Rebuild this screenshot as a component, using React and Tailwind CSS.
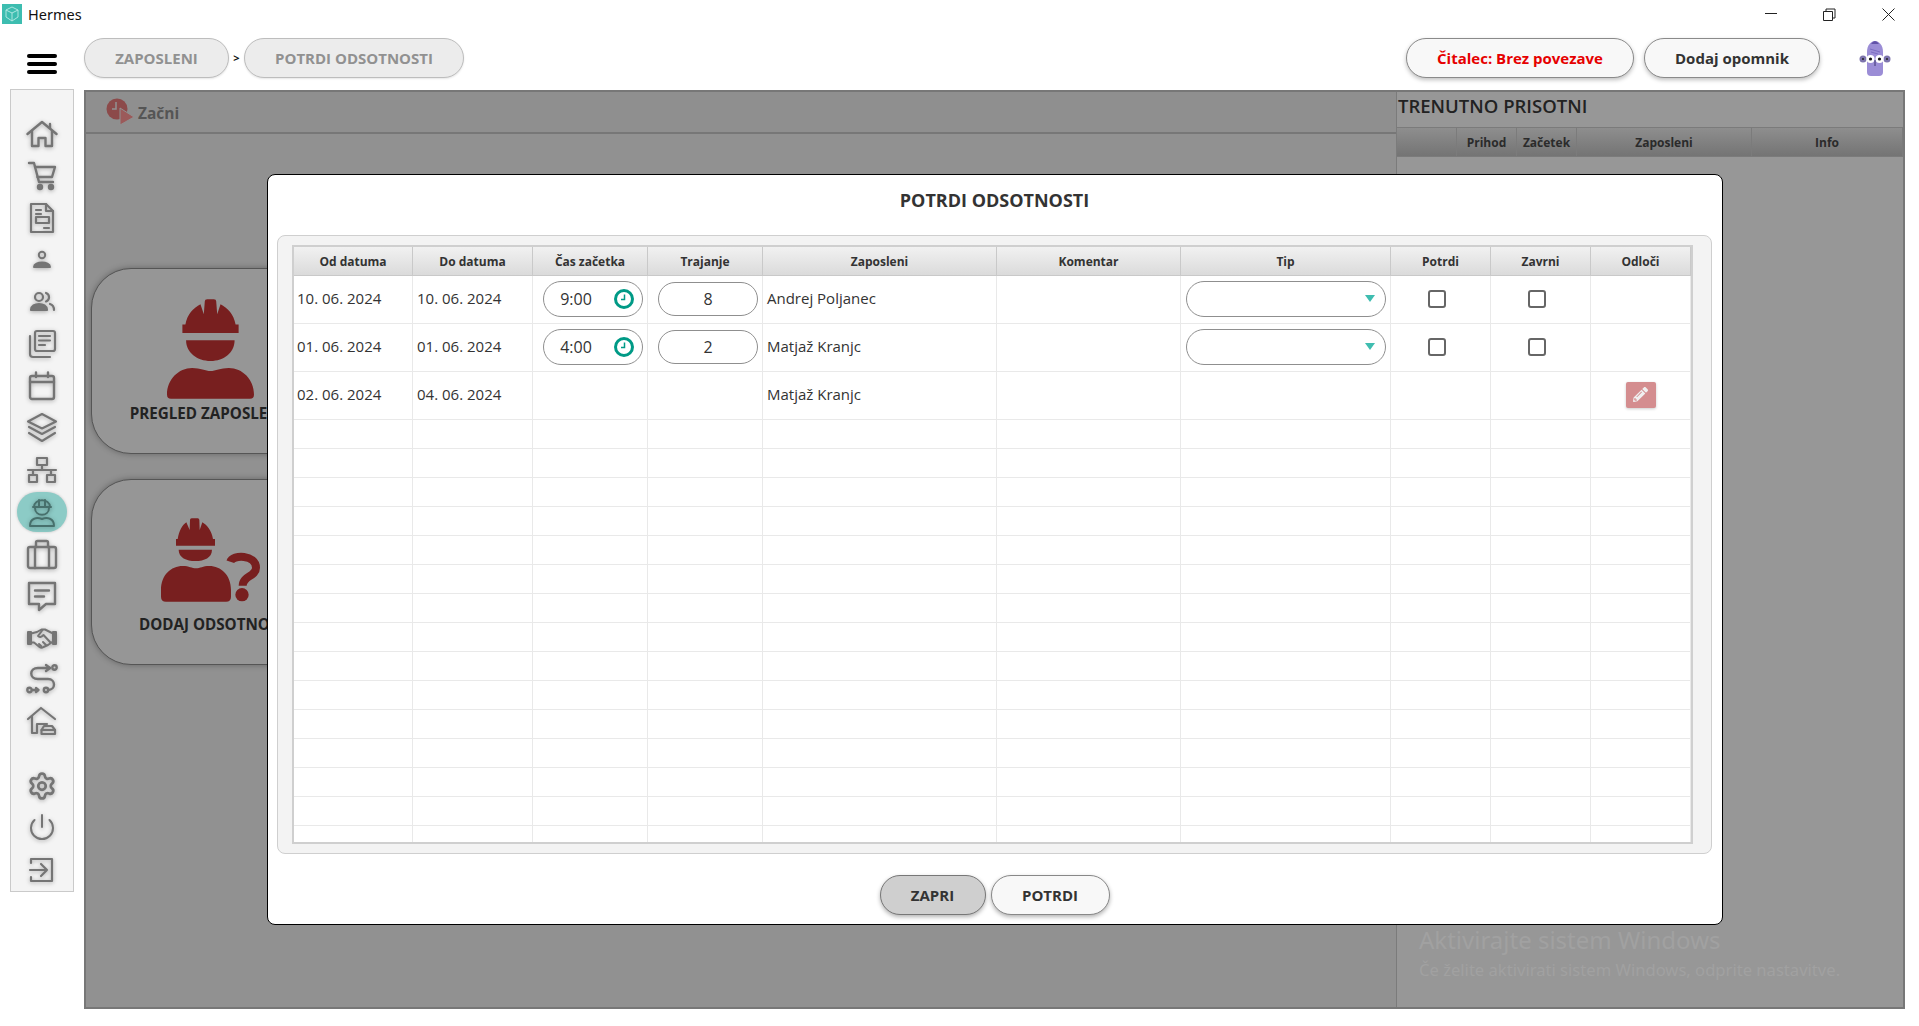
import React from "react";
import { Settings } from "lucide-react";
import { FaPencilAlt } from "react-icons/fa";

const Ico = ({ children, sw = 2.4, color = "#757575" }) => (
  <svg width="32" height="32" viewBox="0 0 32 32" fill="none" stroke={color} strokeWidth={sw} strokeLinecap="round" strokeLinejoin="round" className="drop-shadow-[0_1px_2px_rgba(0,0,0,0.3)]">
    {children}
  </svg>
);

const navTop = [
  <Ico key="home"><path d="M1.5 16 L16 4 L30.5 16" /><path d="M6 13 V28 H12.5 V20 H19.5 V28 H26 V13" /><path d="M24 6 V10" /></Ico>,
  <Ico key="cart"><path d="M3 3 H8 L13 22 H27" /><path d="M9 7 H29 L26 17 H11.5" /><circle cx="14" cy="27" r="2" fill="#757575" /><circle cx="25" cy="27" r="2" fill="#757575" /></Ico>,
  <Ico key="doc" sw={2.2}><path d="M5 2 H20 L27 9 V30 H5 Z" /><path d="M20 2 V9 H27" /><path d="M10 8 H15 M10 12 H15" /><rect x="10" y="15" width="13" height="6" /><path d="M18 26 H23" /></Ico>,
  <Ico key="person" sw={2}><circle cx="16" cy="11" r="3.2" /><path d="M8 23 C8 17 24 17 24 23 Z" fill="#757575" /></Ico>,
  <Ico key="people" sw={2.2}><circle cx="13" cy="11" r="4" /><path d="M5 24 C5 16 21 16 21 24 Z" fill="#757575" /><path d="M20 7 A4.5 4.5 0 0 1 20 15.5" /><path d="M24 18 C27 19 28 21 28 24" /></Ico>,
  <Ico key="news" sw={2.2}><rect x="9" y="3" width="20" height="20" rx="2" /><path d="M4 8 V26 Q4 29 7 29 H24" /><path d="M13 8 H24 M13 12.5 H24 M13 17 H19" /></Ico>,
  <Ico key="cal" sw={2.4}><rect x="4" y="6" width="24" height="23" rx="2" /><path d="M4 12 H28" /><path d="M10 2.5 V7 M22 2.5 V7" /></Ico>,
  <Ico key="layers" sw={2.2}><path d="M16 2 L30 9.5 L16 16.5 L2 9.5 Z" /><path d="M3 15 L16 22 L29 15" /><path d="M3 21 L16 29 L29 21" /></Ico>,
  <Ico key="net" sw={2.2}><rect x="11" y="4" width="10" height="7" /><path d="M16 11 V16 M2 16 H30 M7 16 V21 M25 16 V21" /><rect x="3" y="21" width="8" height="7" /><rect x="21" y="21" width="8" height="7" /></Ico>,
];

const navMid = [
  <Ico key="brief" sw={2.4}><rect x="2" y="9" width="28" height="21" rx="2" /><path d="M10 9 V4.5 Q10 3 11.5 3 H20.5 Q22 3 22 4.5 V9" /><path d="M9 9 V30 M23 9 V30" /></Ico>,
  <Ico key="chat" sw={2.4}><path d="M3 3 H29 V24 H20 L13 30 V24 H3 Z" /><path d="M9 10.5 H23 M9 16.5 H18" /></Ico>,
  <Ico key="hand" sw={2}>
    <rect x="2" y="10" width="3" height="12" fill="#757575" /><rect x="27" y="10" width="3" height="12" fill="#757575" />
    <path d="M5 11.5 L11 10 L15.5 7.5 H19 L27 11.5" />
    <path d="M5 20.5 H8 L13.5 25 Q15.5 26.5 17.5 25 L22 23 L27 19.5" />
    <path d="M16.5 8 L12 14 Q14 16.5 17.5 13 L24.5 20.5" />
    <path d="M13 22 L15.5 24.5 M17 20 L20 23" />
  </Ico>,
  <Ico key="route" sw={2.4}><path d="M24 5 H12 C3 5 3 16 12 16 H22 C30 16 30 27 22 27" /><path d="M20 2 L24 5 L20 8" /><circle cx="28.5" cy="4.5" r="2.2" /><circle cx="3.5" cy="27" r="2.2" /><path d="M7 27 H12 M10 25 L12.5 27 L10 29" /><circle cx="20" cy="27" r="2.2" /></Ico>,
  <Ico key="garage" sw={2.2}><path d="M2 14 L15 3 L29 14" /><path d="M6 11 V28 H11 M11 28 V19 H21" /><path d="M15.5 29 V25 L18 21 H26 L29 25 V29 Z" /><path d="M15.5 25 H29" /></Ico>,
];

const navBottom = [
  <Settings key="gear" size={30} strokeWidth={2.2} color="#757575" className="drop-shadow-[0_1px_2px_rgba(0,0,0,0.3)]" />,
  <Ico key="power" sw={2}><path d="M16 3 V15" /><path d="M8.5 8 A11 11 0 1 0 23.5 8" /></Ico>,
  <Ico key="exit" sw={2.2}><path d="M5 9 V5 H26 V27 H5 V23" /><path d="M4 16 H21 M15 10 L21 16 L15 22" /></Ico>,
];

const NavItem = ({ children }) => <div className="h-[42px] flex items-center justify-center">{children}</div>;

const WorkerIcon = () => (
  <svg width="87" height="100" viewBox="0 0 260 298" fill="#781f1f">
    <path d="M46 76 V101 H214 V76 H205 C200 45 180 25 160 15 L150 45 L147 6 Q147 0 140 0 H120 Q113 0 113 6 L110 45 L100 15 C80 25 60 45 55 76 Z" />
    <path d="M57 123 H202 C202 160 170 185 130 185 C90 185 57 160 57 123 Z" />
    <path d="M0 285 C0 240 35 206 75 206 C100 206 115 215 130 215 C145 215 160 206 185 206 C225 206 260 240 260 285 Q260 298 248 298 H12 Q0 298 0 285 Z" />
  </svg>
);

const WorkerQuestionIcon = () => (
  <svg width="99" height="84" viewBox="0 0 297 250" fill="#781f1f">
    <path d="M45 62 V82 H162 V62 H156 C152 38 138 20 124 12 L116 35 L115 5 Q115 0 110 0 H92 Q87 0 87 5 L86 35 L76 12 C64 20 54 38 50 62 Z" />
    <path d="M53 94 H153 C153 118 130 128 103 128 C76 128 53 118 53 94 Z" />
    <path d="M0 215 C0 170 30 143 65 143 C85 143 92 150 105 150 C118 150 125 143 145 143 C180 143 210 170 210 215 V235 Q210 250 195 250 H15 Q0 250 0 235 Z" />
    <path d="M208 130 C215 108 285 108 285 148 C285 175 245 172 245 202" fill="none" stroke="#781f1f" strokeWidth="24" />
    <circle cx="243" cy="229" r="20" />
  </svg>
);

const ClockIcon = () => (
  <svg width="20" height="20" viewBox="0 0 20 20" fill="none" stroke="#009a86">
    <circle cx="10" cy="10" r="8.5" strokeWidth="3" />
    <path d="M10.5 5.5 V10.5 H7" strokeWidth="1.5" />
  </svg>
);

const GRID = "grid grid-cols-[119px_120px_115px_115px_234px_184px_210px_100px_100px_100px]";
const headers = ["Od datuma", "Do datuma", "Čas začetka", "Trajanje", "Zaposleni", "Komentar", "Tip", "Potrdi", "Zavrni", "Odloči"];
const CELL = "border-r border-b border-[#e9e9e9] flex items-center min-w-0";

const TimePill = ({ v }) => (
  <div className="ml-[10px] w-[100px] h-[36px] rounded-full border border-[#8f8f8f] bg-white relative">
    <span className="absolute left-[15px] top-[5px] w-[34px] text-center text-[16px] leading-[24px] text-[#333]">{v}</span>
    <span className="absolute right-[8px] top-[7px] flex"><ClockIcon /></span>
  </div>
);

const NumPill = ({ v }) => (
  <div className="ml-[10px] w-[100px] h-[34px] rounded-full border border-[#8f8f8f] bg-white flex items-center justify-center text-[16px] text-[#333]">{v}</div>
);

const SelectPill = () => (
  <div className="ml-[5px] w-[200px] h-[36px] rounded-full border border-[#8f8f8f] bg-white flex items-center justify-end pr-[10px]">
    <svg width="10" height="7" viewBox="0 0 10 7"><path d="M0 0 H10 L5 7 Z" fill="#3fbdb0" /></svg>
  </div>
);

const Check = () => (
  <div className="ml-[37px] w-[18px] h-[18px] rounded-[3px] border-2 border-[#666] bg-white" />
);

const DataRow = ({ a, b, time, dur, name, action }) => (
  <div className={`${GRID} h-[48px] text-[15px] text-[#333]`}>
    <div className={`${CELL} pl-[3px] pb-[2px]`}>{a}</div>
    <div className={`${CELL} pl-[4px] pb-[2px]`}>{b}</div>
    <div className={`${CELL} pb-[2px]`}>{time && <TimePill v={time} />}</div>
    <div className={`${CELL} pb-[2px]`}>{dur && <NumPill v={dur} />}</div>
    <div className={`${CELL} pl-[4px] pb-[2px]`}>{name}</div>
    <div className={CELL} />
    <div className={`${CELL} pb-[2px]`}>{time && <SelectPill />}</div>
    <div className={`${CELL} pb-[2px]`}>{time && <Check />}</div>
    <div className={`${CELL} pb-[2px]`}>{time && <Check />}</div>
    <div className={`${CELL} pb-[2px] justify-center`}>
      {action && (
        <div className="w-[30px] h-[26px] rounded-[2px] bg-[#d48d8f] flex items-center justify-center shadow-[0_1px_3px_rgba(0,0,0,0.2)]">
          <FaPencilAlt size={15} color="#f0f0f0" />
        </div>
      )}
    </div>
  </div>
);

const EmptyRow = () => (
  <div className={`${GRID} h-[29px]`}>
    {headers.map((x) => <div key={x} className={CELL} />)}
  </div>
);

const Card = ({ icon, label, iconClass }) => (
  <div className="w-[238px] h-[186px] rounded-[40px] border border-[#555] bg-[#969696] shadow-[0_0_6px_rgba(0,0,0,0.3)] flex flex-col items-center overflow-hidden">
    <div className={iconClass}>{icon}</div>
    <div className="mt-auto mb-[29px] ml-[6px] text-[15.2px] leading-[22px] font-bold text-[#222] whitespace-nowrap">{label}</div>
  </div>
);

const Mascot = () => (
  <svg width="32" height="38" viewBox="0 0 32 38">
    <path d="M8 13 C8 6 12 2 16 2 C20 2 24 6 24 13 V33 Q24 37 20 37 H12 Q8 37 8 33 Z" fill="#9b8dd6" />
    <path d="M12 5 Q16 -1 20 5 Z" fill="#6253a8" />
    <path d="M11 10 L21 13 M12 13 L19 15" stroke="#7b6cc0" strokeWidth="1" />
    <circle cx="4" cy="20" r="3.5" fill="#7d74ad" /><circle cx="28" cy="20" r="3.5" fill="#7d74ad" />
    <circle cx="4" cy="20" r="1" fill="#222" /><circle cx="28" cy="20" r="1" fill="#222" />
    <circle cx="11.5" cy="20" r="4" fill="#fff" /><circle cx="20.5" cy="20" r="4" fill="#fff" />
    <circle cx="11.5" cy="20" r="1.6" fill="#111" /><circle cx="20.5" cy="20" r="1.6" fill="#111" />
    <path d="M16 21 V27" stroke="#3d3570" strokeWidth="1" />
  </svg>
);

export default function App() {
  return (
    <div className="w-[1919px] h-[1026px] bg-white overflow-hidden flex flex-col font-['Open_Sans',sans-serif]">
      {/* title bar */}
      <div className="h-[30px] flex items-center relative">
        <div className="ml-[2px] mt-[-2px] w-[20px] h-[20px] bg-[#3dbdb0] flex items-center justify-center">
          <svg width="16" height="16" viewBox="0 0 16 16" fill="none" stroke="#b9ebe5" strokeWidth="0.9">
            <path d="M8 1 L14 4 V11 L8 15 L2 11 V4 Z M2 4 L8 7 L14 4 M8 7 V15" />
          </svg>
        </div>
        <span className="ml-[6px] text-[14.5px] text-[#111] font-['Noto_Sans',sans-serif]">Hermes</span>
        <svg className="absolute left-[1765px] top-[8px]" width="130" height="14" viewBox="0 0 130 14" fill="none" stroke="#222" strokeWidth="1">
          <path d="M0 5.5 H12" />
          <path d="M58.5 3.5 H67.5 V12.5 H58.5 Z M61 3.5 V1 H70 V10 H67.5" />
          <path d="M117.5 0.5 L129.5 12.5 M129.5 0.5 L117.5 12.5" />
        </svg>
      </div>

      {/* top bar */}
      <div className="h-[60px] flex items-start">
        <div className="w-[84px] pl-[27px] pt-[24px] flex flex-col gap-[4px]">
          <div className="w-[30px] h-[4px] rounded-full bg-black" />
          <div className="w-[30px] h-[4px] rounded-full bg-black" />
          <div className="w-[30px] h-[4px] rounded-full bg-black" />
        </div>
        <div className="mt-[8px] flex items-center">
          <div className="w-[145px] h-[40px] rounded-full border-[1.5px] border-[#bdbdbd] bg-[#ececec] flex items-center justify-center text-[15px] font-bold text-[#919191] shadow-[0_1px_2px_rgba(0,0,0,0.1)]">ZAPOSLENI</div>
          <span className="w-[15px] text-center text-[11px] font-bold text-[#111]">&gt;</span>
          <div className="w-[220px] h-[40px] rounded-full border-[1.5px] border-[#bdbdbd] bg-[#ececec] flex items-center justify-center text-[15px] font-bold text-[#919191] shadow-[0_1px_2px_rgba(0,0,0,0.1)]">POTRDI ODSOTNOSTI</div>
        </div>
        <div className="ml-auto mt-[8px] flex items-center">
          <div className="w-[228px] h-[40px] rounded-full border-[1.5px] border-[#8a8a8a] bg-[#f8f8f8] flex items-center justify-center text-[15px] font-bold text-[#e60000] shadow-[0_2px_4px_rgba(0,0,0,0.25)]">Čitalec: Brez povezave</div>
          <div className="ml-[10px] w-[176px] h-[40px] rounded-full border-[1.5px] border-[#8a8a8a] bg-[#f8f8f8] flex items-center justify-center text-[15px] font-bold text-[#333] shadow-[0_2px_4px_rgba(0,0,0,0.25)]">Dodaj opomnik</div>
          <div className="ml-[39px] mr-[28px] flex"><Mascot /></div>
        </div>
      </div>

      {/* body */}
      <div className="h-[919px] flex items-start">
        {/* sidebar */}
        <div className="ml-[10px] mt-[-1px] w-[64px] h-[803px] border-[1.5px] border-[#cacaca] bg-[#f4f4f4] pt-[23.5px] flex flex-col">
          {navTop.map((n, i) => <NavItem key={i}>{n}</NavItem>)}
          <NavItem>
            <div className="w-[50px] h-[40px] rounded-full bg-[#8ccbc6] shadow-[0_0_3px_rgba(0,0,0,0.2)] flex items-center justify-center">
              <Ico sw={2} color="#47706c">
                <path d="M8 11 C8 2 24 2 24 11" /><path d="M7 11 H25" /><path d="M13 4 V10 M19 4 V10" />
                <path d="M9 12 C9 21 23 21 23 12" />
                <path d="M4 30 C4 22 11 21 16 23 C21 21 28 22 28 30 Z" />
              </Ico>
            </div>
          </NavItem>
          {navMid.map((n, i) => <NavItem key={i}>{n}</NavItem>)}
          <div className="h-[23px]" />
          {navBottom.map((n, i) => <NavItem key={i}>{n}</NavItem>)}
        </div>

        {/* main panel */}
        <div className="ml-[10px] w-[1821px] h-[919px] border-2 border-[#777] bg-[#919191] flex relative">
          {/* left */}
          <div className="w-[1310px] flex flex-col">
            <div className="h-[42px] border-b-2 border-[#777] bg-[#8f8f8f] flex items-center pl-[20px]">
              <svg width="28" height="28" viewBox="0 0 28 28">
                <circle cx="11" cy="11" r="10.5" fill="#8c4a4a" />
                <path d="M10 4 V11 H6" stroke="#919191" strokeWidth="1.5" fill="none" />
                <path d="M14 10 L28 19 L14 27 Z" fill="#9b5a5a" stroke="#919191" strokeWidth="1" />
              </svg>
              <span className="ml-[4px] mt-[4px] text-[15.5px] font-bold text-[#555]">Začni</span>
            </div>
            <div className="pl-[5px] pt-[134px] flex flex-col gap-[25px]">
              <Card icon={<WorkerIcon />} label="PREGLED ZAPOSLENIH" iconClass="mt-[30px]" />
              <Card icon={<WorkerQuestionIcon />} label="DODAJ ODSOTNOST" iconClass="mt-[38px]" />
            </div>
          </div>
          {/* right */}
          <div className="flex-1 border-l border-[#7b7b7b] bg-[#979797] flex flex-col">
            <div className="h-[35px] flex items-center pl-[1px] pb-[7px] text-[18.5px] font-semibold text-[#222]">TRENUTNO PRISOTNI</div>
            <div className="grid grid-cols-[60px_60px_60px_175px_151px] h-[30px] border-y border-[#7b7b7b] bg-gradient-to-b from-[#8e8e8e] to-[#747474] text-[12px] font-bold text-[#2b2b2b]">
              {["", "Prihod", "Začetek", "Zaposleni", "Info"].map((h, i) => (
                <div key={i} className="border-r border-[#7b7b7b] flex items-center justify-center pt-[1px]">{h}</div>
              ))}
            </div>
          </div>

          {/* windows activation watermark */}
          <div className="absolute left-[1333px] top-[832px] text-[#a1a1a1] font-['Noto_Sans',sans-serif] pointer-events-none">
            <div className="text-[24px] leading-[32px]">Aktivirajte sistem Windows</div>
            <div className="text-[16.6px] leading-[22px] mt-[3px]">Če želite aktivirati sistem Windows, odprite nastavitve.</div>
          </div>

          {/* modal */}
          <div className="absolute left-[180.5px] top-[82px] w-[1456px] h-[751px] rounded-[8px] border-[1.5px] border-black bg-white flex flex-col">
            <div className="h-[59.5px] flex items-center justify-center pb-[8px] text-[18px] font-bold text-[#333]">POTRDI ODSOTNOSTI</div>
            <div className="ml-[9px] w-[1435px] h-[619px] rounded-[8px] border-[1.5px] border-[#cfcfcf] bg-[#f3f3f3] pl-[14.5px] pt-[9.5px]">
              <div className="w-[1401px] h-[599px] border-2 border-[#cfcfcf] bg-white overflow-hidden">
                <div className={`${GRID} h-[29px] bg-gradient-to-b from-[#f1f1f1] to-[#dadada] text-[12px] font-bold text-[#333]`}>
                  {headers.map((h) => (
                    <div key={h} className="border-r border-b border-[#c9c9c9] flex items-center justify-center pt-[1px]">{h}</div>
                  ))}
                </div>
                <DataRow a="10. 06. 2024" b="10. 06. 2024" time="9:00" dur="8" name="Andrej Poljanec" />
                <DataRow a="01. 06. 2024" b="01. 06. 2024" time="4:00" dur="2" name="Matjaž Kranjc" />
                <DataRow a="02. 06. 2024" b="04. 06. 2024" name="Matjaž Kranjc" action />
                {Array.from({ length: 15 }).map((_, i) => <EmptyRow key={i} />)}
              </div>
            </div>
            <div className="mt-[21px] ml-[612px] flex gap-[5px]">
              <div className="w-[106px] h-[40px] pt-[1px] rounded-full border-[1.5px] border-[#777] bg-[#cfcfcf] flex items-center justify-center text-[15px] font-bold text-[#333] shadow-[0_2px_4px_rgba(0,0,0,0.3)]">ZAPRI</div>
              <div className="w-[119px] h-[40px] pt-[1px] rounded-full border-[1.5px] border-[#888] bg-[#f8f8f8] flex items-center justify-center text-[15px] font-bold text-[#333] shadow-[0_2px_4px_rgba(0,0,0,0.3)]">POTRDI</div>
            </div>
          </div>
        </div>
      </div>
    </div>
  );
}
